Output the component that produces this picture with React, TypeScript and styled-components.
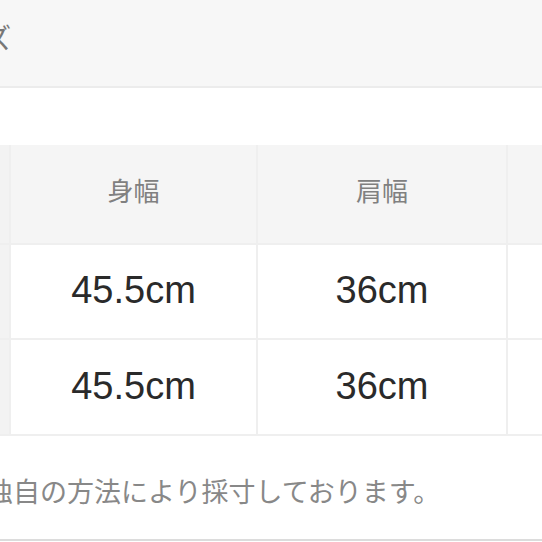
import * as React from 'react'
import styled, { createGlobalStyle } from 'styled-components'

const sizes = [
  { label: '身幅', values: ['45.5cm', '45.5cm'] },
  { label: '肩幅', values: ['36cm', '36cm'] },
  { label: '', values: ['', ''] },
]

const App: React.FC<{}> = () => {
  return (
    <React.Fragment>
      <GlobalStyle />
      <Page>
        <TitleBar>
          <Title>サイズ</Title>
        </TitleBar>
        <SizeTable>
          <HeadCell $side />
          {sizes.map(({ label }, i) => (
            <HeadCell key={i}>{label}</HeadCell>
          ))}
          {[0, 1].map((row) => (
            <React.Fragment key={row}>
              <HeadCell $side />
              {sizes.map(({ values }, i) => (
                <DataCell key={i}>{values[row]}</DataCell>
              ))}
            </React.Fragment>
          ))}
        </SizeTable>
        <Note>独自の方法により採寸しております。</Note>
        <BottomRule />
      </Page>
    </React.Fragment>
  )
}

const GlobalStyle = createGlobalStyle`
  html, body {
    margin: 0;
    padding: 0;
    background: #fff;
  }
  body {
    font-family: "Liberation Sans", "Noto Sans CJK JP", sans-serif;
  }
`

const Page = styled.div`
  width: 542px;
  height: 542px;
  overflow: hidden;
  display: flex;
  flex-direction: column;
`

const TitleBar = styled.div`
  height: 86px;
  flex-shrink: 0;
  background: #f7f7f7;
  border-bottom: 2px solid #ececec;
  display: flex;
  align-items: center;
  overflow: hidden;
`

const Title = styled.div`
  margin-left: -72px;
  margin-top: -12px;
  font-family: "Noto Sans CJK JP", sans-serif;
  font-size: 28px;
  color: #777;
  white-space: nowrap;
`

const SizeTable = styled.div`
  margin-top: 57px;
  display: grid;
  grid-template-columns: 9px 245px 248px 1fr;
  grid-template-rows: 98px 93px 94px;
  gap: 2px;
  padding-bottom: 2px;
  background: #efefef;
  flex-shrink: 0;
`

const HeadCell = styled.div<{ $side?: boolean }>`
  background: ${({ $side }) => ($side ? '#f3f3f3' : '#f5f5f5')};
  display: flex;
  align-items: center;
  justify-content: center;
  font-family: "Noto Sans CJK JP", sans-serif;
  font-size: 26px;
  color: #808080;
  padding-bottom: 10px;
`

const DataCell = styled.div`
  background: #fff;
  display: flex;
  align-items: center;
  justify-content: center;
  font-family: "Liberation Sans", sans-serif;
  font-size: 38px;
  color: #2a2a2a;
  padding-bottom: 2px;
`

const Note = styled.div`
  margin-top: 37px;
  text-indent: -14px;
  font-family: "Noto Sans CJK JP", sans-serif;
  font-size: 27px;
  line-height: 36px;
  color: #888;
  white-space: nowrap;
`

const BottomRule = styled.div`
  margin-top: auto;
  margin-bottom: 1px;
  height: 2px;
  background: #dcdcdc;
  flex-shrink: 0;
`

export default App
